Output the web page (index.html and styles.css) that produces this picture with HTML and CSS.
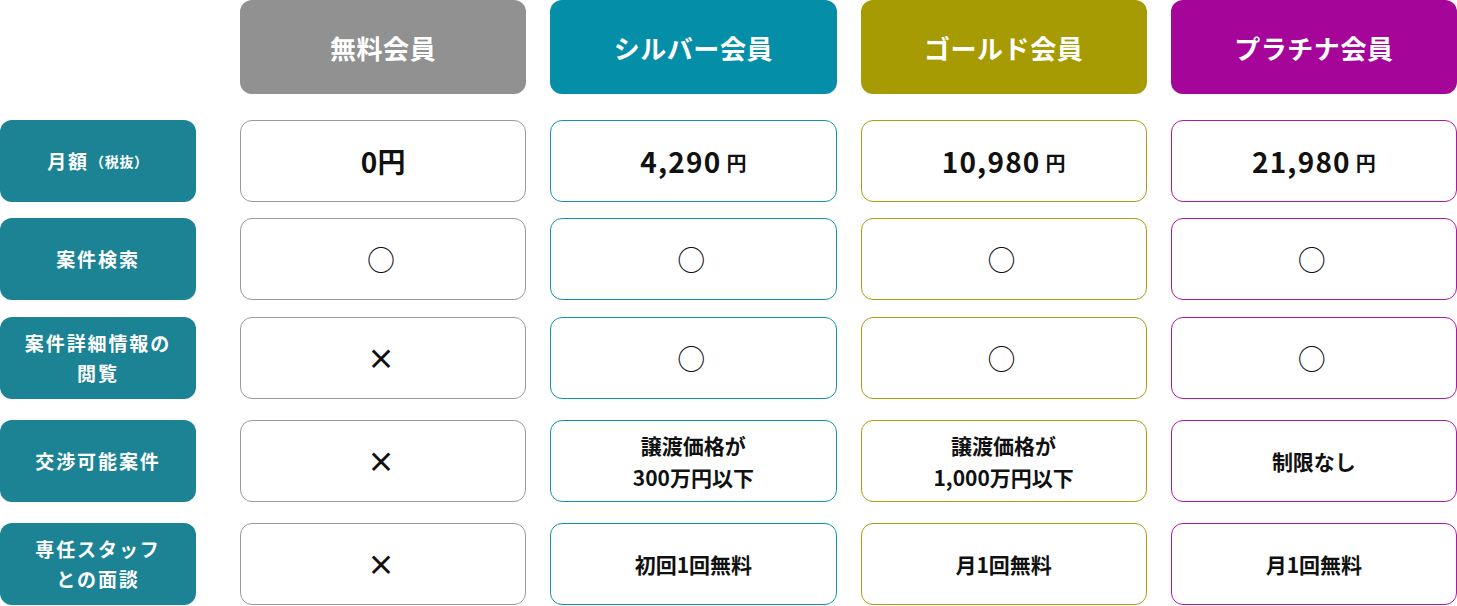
FILE: index.html
```html
<!DOCTYPE html>
<html lang="ja">
<head>
<meta charset="utf-8">
<title>会員プラン比較</title>
<link rel="stylesheet" href="styles.css">
</head>
<body>
<div class="plans">
  <div class="row row--head">
    <div class="spacer"></div>
    <div class="head head--free">無料会員</div>
    <div class="head head--silver">シルバー会員</div>
    <div class="head head--gold">ゴールド会員</div>
    <div class="head head--plat">プラチナ会員</div>
  </div>

  <div class="row row--a">
    <div class="label">月額<span class="label-note">（税抜）</span></div>
    <div class="cell cell--free"><span class="price price--zero">0円</span></div>
    <div class="cell cell--silver"><span class="price">4,290</span><span class="yen">円</span></div>
    <div class="cell cell--gold"><span class="price">10,980</span><span class="yen">円</span></div>
    <div class="cell cell--plat"><span class="price">21,980</span><span class="yen">円</span></div>
  </div>

  <div class="row row--b">
    <div class="label">案件検索</div>
    <div class="cell cell--free"><span class="mark">○</span></div>
    <div class="cell cell--silver"><span class="mark">○</span></div>
    <div class="cell cell--gold"><span class="mark">○</span></div>
    <div class="cell cell--plat"><span class="mark">○</span></div>
  </div>

  <div class="row row--c">
    <div class="label">案件詳細情報の<br>閲覧</div>
    <div class="cell cell--free"><span class="cross">×</span></div>
    <div class="cell cell--silver"><span class="mark">○</span></div>
    <div class="cell cell--gold"><span class="mark">○</span></div>
    <div class="cell cell--plat"><span class="mark">○</span></div>
  </div>

  <div class="row row--d">
    <div class="label">交渉可能案件</div>
    <div class="cell cell--free"><span class="cross">×</span></div>
    <div class="cell cell--silver"><span class="text">譲渡価格が<br>300万円以下</span></div>
    <div class="cell cell--gold"><span class="text">譲渡価格が<br>1,000万円以下</span></div>
    <div class="cell cell--plat"><span class="text">制限なし</span></div>
  </div>

  <div class="row row--d">
    <div class="label">専任スタッフ<br>との面談</div>
    <div class="cell cell--free"><span class="cross">×</span></div>
    <div class="cell cell--silver"><span class="text">初回1回無料</span></div>
    <div class="cell cell--gold"><span class="text">月1回無料</span></div>
    <div class="cell cell--plat"><span class="text">月1回無料</span></div>
  </div>
</div>
</body>
</html>
```

FILE: styles.css
```css
* { box-sizing: border-box; }

html, body {
  margin: 0;
  padding: 0;
  background: #fff;
}

body {
  font-family: "Noto Sans CJK JP", "Noto Sans", sans-serif;
  color: #111;
  width: 1457px;
}

.plans {
  display: flex;
  flex-direction: column;
}

.row {
  display: grid;
  grid-template-columns: 216px repeat(4, 1fr);
  column-gap: 24px;
  height: 82px;
}

.row--head { height: 94px; }
.row--a { margin-top: 26px; }
.row--b { margin-top: 16px; }
.row--c { margin-top: 17px; }
.row--d { margin-top: 21px; }

.head {
  display: flex;
  align-items: center;
  justify-content: center;
  border-radius: 12px;
  color: #fff;
  font-weight: 700;
  font-size: 26px;
  letter-spacing: 0.02em;
}

.head--free { background: #909190; }
.head--silver { background: #058ea7; }
.head--gold { background: #a69b02; }
.head--plat { background: #a6059a; }

.label {
  width: 196px;
  display: flex;
  align-items: center;
  justify-content: center;
  text-align: center;
  background: #1b8394;
  border-radius: 12px;
  color: #fff;
  font-weight: 700;
  font-size: 19px;
  line-height: 30px;
  letter-spacing: 0.1em;
}

.label-note {
  font-size: 14px;
  letter-spacing: 0.05em;
  margin-left: 1px;
}

.cell {
  display: flex;
  align-items: center;
  justify-content: center;
  text-align: center;
  background: #fff;
  border: 1.5px solid #9a9a9a;
  border-radius: 12px;
}

.cell--silver { border-color: #1392a9; }
.cell--gold { border-color: #aa9f10; }
.cell--plat { border-color: #ad18a2; }

.price {
  font-weight: 700;
  font-size: 28px;
  line-height: 1;
  letter-spacing: 1.2px;
}

.price--zero { letter-spacing: 0; }

.yen {
  font-weight: 700;
  font-size: 20px;
  margin-left: 5px;
  line-height: 1;
  padding-top: 4px;
}

.mark {
  font-size: 28px;
  font-weight: 400;
  line-height: 1;
  letter-spacing: 4px;
}

.cross {
  font-size: 28px;
  font-weight: 700;
  line-height: 1;
  letter-spacing: 4px;
}

.text {
  font-weight: 700;
  font-size: 21px;
  line-height: 32px;
}
```
